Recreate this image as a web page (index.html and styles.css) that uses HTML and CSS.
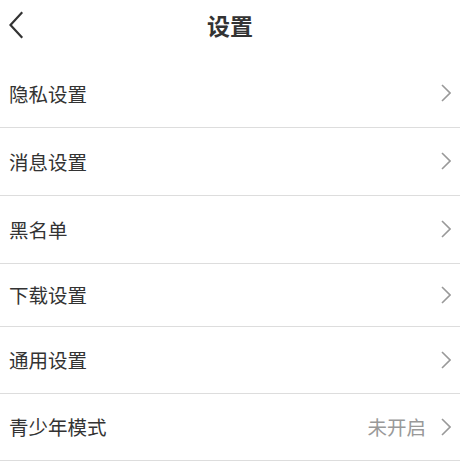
FILE: index.html
```html
<!DOCTYPE html>
<html>
<head>
    <meta charset="UTF-8">
    <title>设置</title>
    <link rel="stylesheet" href="styles.css">
</head>
<body>
    <div class="header">
        <span class="back">
            <svg width="16" height="28" viewBox="0 0 16 28">
                <polyline points="13.5,2 2.5,14 13.5,26" fill="none" stroke="#333" stroke-width="2.2" stroke-linecap="square"/>
            </svg>
        </span>
        <h1 class="title">设置</h1>
    </div>
    <ul class="menu">
        <li class="row"><span class="label">隐私设置</span><svg class="arrow" viewBox="0 0 10 18"><polyline points="1,1 9,9 1,17"/></svg></li>
        <li class="row"><span class="label">消息设置</span><svg class="arrow" viewBox="0 0 10 18"><polyline points="1,1 9,9 1,17"/></svg></li>
        <li class="row"><span class="label">黑名单</span><svg class="arrow" viewBox="0 0 10 18"><polyline points="1,1 9,9 1,17"/></svg></li>
        <li class="row row-short"><span class="label">下载设置</span><svg class="arrow" viewBox="0 0 10 18"><polyline points="1,1 9,9 1,17"/></svg></li>
        <li class="row row-mid"><span class="label">通用设置</span><svg class="arrow" viewBox="0 0 10 18"><polyline points="1,1 9,9 1,17"/></svg></li>
        <li class="row row-mid"><span class="label">青少年模式</span><span class="value">未开启</span><svg class="arrow" viewBox="0 0 10 18"><polyline points="1,1 9,9 1,17"/></svg></li>
    </ul>
</body>
</html>
```

FILE: styles.css
```css
body {
    margin: 0;
    padding: 0;
    background-color: #fff;
    color: #333;
    font-family: "Noto Sans CJK SC", "Noto Sans", sans-serif;
}
.header {
    position: relative;
    height: 60px;
    display: flex;
    align-items: center;
    justify-content: center;
}
.back {
    position: absolute;
    left: 8px;
    top: 11px;
    display: flex;
}
.title {
    margin: 0 0 10px;
    font-size: 23px;
    font-weight: bold;
    color: #333;
}
.menu {
    list-style: none;
    margin: 0;
    padding: 0;
}
.row {
    box-sizing: border-box;
    height: 68px;
    display: flex;
    align-items: center;
    padding: 0 9px 1px 9px;
    border-bottom: 1px solid #ddd;
    font-size: 19.5px;
}
.row-short {
    height: 63px;
}
.row-mid {
    height: 67px;
}
.label {
    flex: 1;
}
.value {
    color: #999;
    margin-right: 15px;
}
.arrow {
    width: 10px;
    height: 18px;
    fill: none;
    stroke: #999;
    stroke-width: 1.6;
}
```
